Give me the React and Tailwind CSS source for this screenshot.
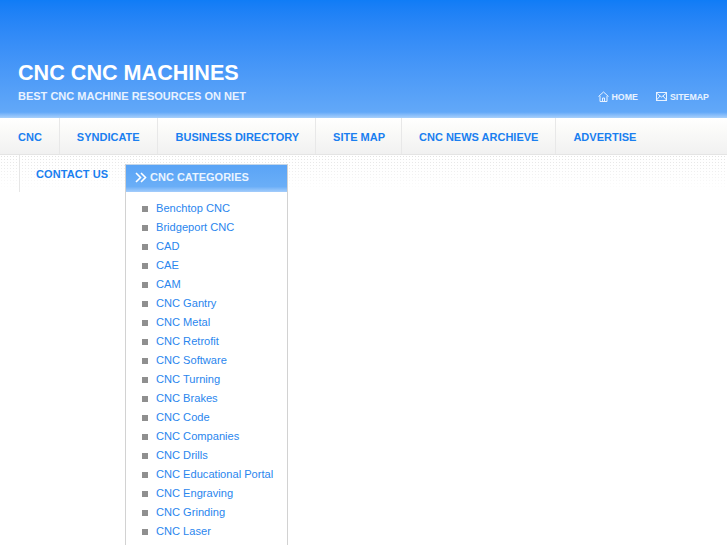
import React from "react";

const navItems = [
  { label: "CNC", className: "pl-[18px] pr-[17px]" },
  { label: "SYNDICATE", className: "px-[17px]" },
  { label: "BUSINESS DIRECTORY", className: "pl-[18px] pr-[16px]" },
  { label: "SITE MAP", className: "pl-[17px] pr-[16px]" },
  { label: "CNC NEWS ARCHIEVE", className: "px-[17px]" },
  { label: "ADVERTISE", className: "px-[17px]" },
];

const categories = [
  "Benchtop CNC",
  "Bridgeport CNC",
  "CAD",
  "CAE",
  "CAM",
  "CNC Gantry",
  "CNC Metal",
  "CNC Retrofit",
  "CNC Software",
  "CNC Turning",
  "CNC Brakes",
  "CNC Code",
  "CNC Companies",
  "CNC Drills",
  "CNC Educational Portal",
  "CNC Engraving",
  "CNC Grinding",
  "CNC Laser",
];

const HomeIcon = () => (
  <svg width="11" height="11" viewBox="0 0 11 11" fill="none" stroke="#e8f2ff" strokeWidth="1">
    <path d="M0.5 5.5 L5.5 1 L10.5 5.5" />
    <path d="M2 5 V10.5 H9 V5" />
    <path d="M4.5 10.5 V7 H6.5 V10.5" />
  </svg>
);

const MailIcon = () => (
  <svg width="11" height="9" viewBox="0 0 11 9" fill="none" stroke="#e8f2ff" strokeWidth="1">
    <rect x="0.5" y="0.5" width="10" height="8" />
    <path d="M0.5 1 L5.5 5 L10.5 1 M0.5 8 L4 4 M10.5 8 L7 4" />
  </svg>
);

const Chevrons = () => (
  <svg width="12" height="11" viewBox="0 0 12 11" fill="none" stroke="#ffffff" strokeWidth="1.6">
    <path d="M1 1 L5.5 5.5 L1 10" />
    <path d="M6 1 L10.5 5.5 L6 10" />
  </svg>
);

export default function App() {
  return (
    <div className="h-screen overflow-hidden bg-white font-['Liberation_Sans',Arial,sans-serif]">
      <header className="h-[118px] bg-gradient-to-b from-[#107cf6] via-[#62a8f8] via-[95%] to-[#a8d0fb] relative">
        <div className="pl-[18px] pt-[60px]">
          <h1 className="text-[21.6px] leading-[26px] font-bold text-white">CNC CNC MACHINES</h1>
          <p className="text-[11px] leading-[14px] mt-[3px] font-bold text-[#e8f2ff]">
            BEST CNC MACHINE RESOURCES ON NET
          </p>
        </div>
        <div className="absolute right-[18px] top-[91px] flex items-center gap-[18px] text-[8.8px] leading-[10px] font-bold text-[#e8f2ff]">
          <a className="flex items-center gap-[2px]"><HomeIcon />HOME</a>
          <a className="flex items-center gap-[3px]"><MailIcon />SITEMAP</a>
        </div>
      </header>

      <nav className="flex h-[37px] bg-gradient-to-b from-white via-[#fbfbf9] via-[30%] to-[#f1f1f1] border-b border-[#e4e4e4]">
        {navItems.map((item) => (
          <a
            key={item.label}
            className={`flex items-center pt-[3px] border-r border-[#e8e8e8] text-[11px] font-bold text-[#1a7ff0] last:border-r-0 ${item.className}`}
          >
            {item.label}
          </a>
        ))}
      </nav>

      <div className="h-[36px] relative bg-[radial-gradient(#e2e2e2_0.8px,transparent_0.8px)] bg-[length:3px_3px]">
        <div className="absolute inset-0 bg-gradient-to-b from-transparent to-white"></div>
      </div>

      <div className="flex items-start -mt-[36px] relative">
        <a className="ml-[19px] w-[106px] h-[37px] pl-[16px] pt-[12px] border-l border-[#e6e6e6] text-[11px] leading-[14px] tracking-[0.1px] font-bold text-[#1a7ff0]">
          CONTACT US
        </a>
        <aside className="w-[163px] mt-[9px] border border-t-0 border-[#d2d2d2] bg-white">
          <h2 className="flex items-center gap-[3px] h-[28px] pb-[2px] pl-[9px] border-t border-[#c4d6e8] bg-gradient-to-b from-[#5aa4f6] via-[#6aaef7] via-[80%] to-[#a4cdfb] text-[11px] font-bold text-[#eaf4ff]">
            <Chevrons />
            CNC CATEGORIES
          </h2>
          <ul className="pt-[7px] pb-[20px]">
            {categories.map((name) => (
              <li key={name} className="flex items-center h-[19px] pl-[16px] text-[11.1px] text-[#2a86ee]">
                <span className="w-[6px] h-[6px] bg-[#8f8f8f] mr-[8px]"></span>
                {name}
              </li>
            ))}
          </ul>
        </aside>
      </div>
    </div>
  );
}
